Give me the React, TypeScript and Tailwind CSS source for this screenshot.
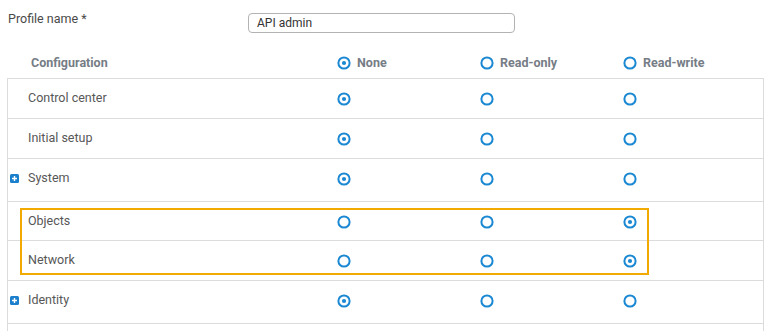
import React from 'react';

type Level = 'none' | 'ro' | 'rw';

interface Row {
  label: string;
  value: Level;
  expandable?: boolean;
}

const rows: Row[] = [
  { label: 'Control center', value: 'none' },
  { label: 'Initial setup', value: 'none' },
  { label: 'System', value: 'none', expandable: true },
  { label: 'Objects', value: 'rw' },
  { label: 'Network', value: 'rw' },
  { label: 'Identity', value: 'none', expandable: true },
];

function Radio({ checked }: { checked: boolean }) {
  return (
    <svg width="14" height="14" viewBox="0 0 14 14" className="shrink-0">
      <circle cx="7" cy="7" r="5.6" fill="white" stroke="#1b88d3" strokeWidth="2" />
      {checked && <circle cx="7" cy="7" r="2.1" fill="#1b88d3" />}
    </svg>
  );
}

function PlusIcon() {
  return (
    <svg width="9" height="9" viewBox="0 0 9 9" className="shrink-0">
      <rect x="0" y="0" width="9" height="9" rx="1.5" fill="#1b7fcc" />
      <path d="M4.5 2v5M2 4.5h5" stroke="white" strokeWidth="1.4" />
    </svg>
  );
}

function RadioCells({ value }: { value: Level }) {
  return (
    <div className="flex">
      {(['none', 'ro', 'rw'] as Level[]).map(l => (
        <div key={l} className="w-[143px] flex items-center">
          <Radio checked={value === l} />
        </div>
      ))}
    </div>
  );
}

function TableRow({ row, extra }: { row: Row; extra: string }) {
  return (
    <div className={`flex items-start border-b border-[#dcdcdc] ${extra}`}>
      <div className="w-[329px] shrink-0 h-[39px] flex items-center">
        <div className="w-[20px] pl-[2px] flex items-center">
          {row.expandable && <PlusIcon />}
        </div>
        <span className="text-[12.5px] text-[#575757]">{row.label}</span>
      </div>
      <div className="h-[39px] flex items-center">
        <RadioCells value={row.value} />
      </div>
    </div>
  );
}

export default function App() {
  const font = { fontFamily: 'Roboto, "Liberation Sans", sans-serif' };
  return (
    <div className="w-[769px] h-[331px] bg-white overflow-hidden" style={font}>
      {/* Profile name */}
      <div className="flex items-start pt-[13px] pl-[8px]">
        <span className="w-[240px] text-[12.5px] text-[#4a4a4a] leading-[12px]">Profile name *</span>
        <div className="w-[267px] h-[20px] border border-[#b3b3b3] rounded-[4px] flex items-center pl-[8px] text-[12px] text-[#333]">
          API admin
        </div>
      </div>

      {/* Header */}
      <div className="flex items-center h-[30px] mt-[15px] pl-[8px]">
        <div className="w-[329px] shrink-0 pl-[23px] text-[12.5px] font-bold text-[#767d86]">Configuration</div>
        {[
          { l: 'None', c: true },
          { l: 'Read-only', c: false },
          { l: 'Read-write', c: false },
        ].map(h => (
          <div key={h.l} className="w-[143px] flex items-center gap-[6px]">
            <Radio checked={h.c} />
            <span className="text-[12.5px] font-bold text-[#767d86]">{h.l}</span>
          </div>
        ))}
      </div>

      {/* Table */}
      <div className="ml-[7px] w-[757px] border-l border-r border-t border-[#dcdcdc]">
        <TableRow row={rows[0]} extra="h-[40px]" />
        <TableRow row={rows[1]} extra="h-[40px]" />
        <TableRow row={rows[2]} extra="h-[43px]" />
        <div className="relative">
          <TableRow row={rows[3]} extra="h-[39px]" />
          <TableRow row={rows[4]} extra="h-[40px]" />
          <div className="absolute left-[12px] top-[6px] w-[629px] h-[67px] border-2 border-[#f2a900] pointer-events-none" />
        </div>
        <TableRow row={rows[5]} extra="h-[43px]" />
        <div className="h-[40px]" />
      </div>
    </div>
  );
}
